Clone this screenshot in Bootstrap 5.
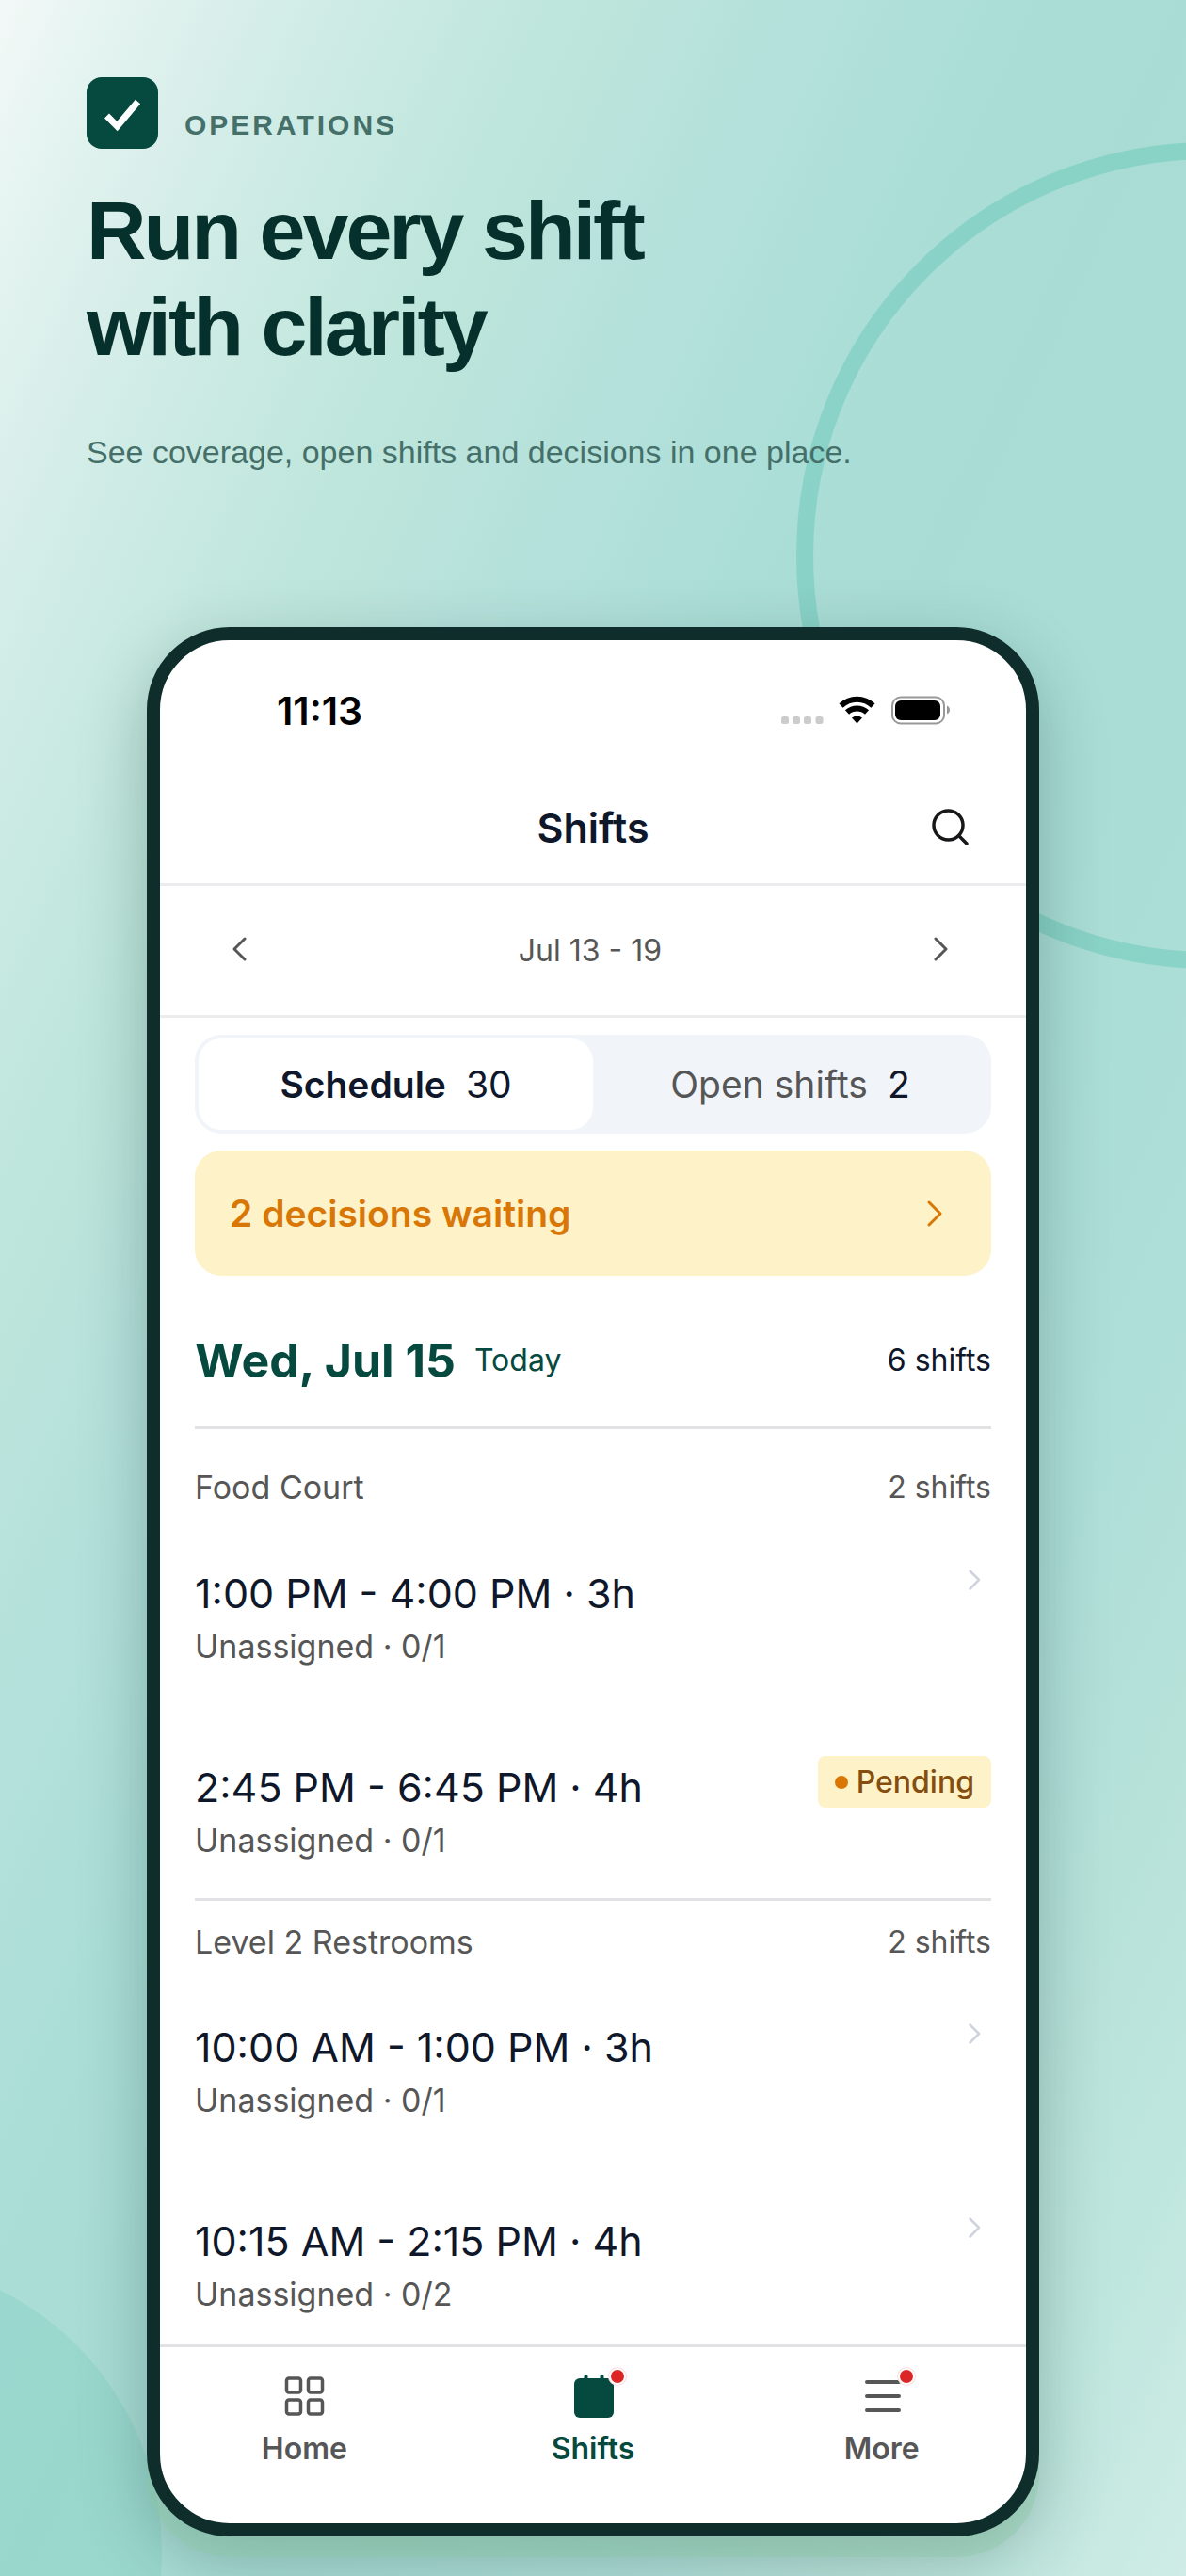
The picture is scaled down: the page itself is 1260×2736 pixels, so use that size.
<!DOCTYPE html>
<html lang="en">
<head>
<meta charset="utf-8">
<meta name="viewport" content="width=device-width, initial-scale=1">
<title>Run every shift with clarity</title>
<link rel="stylesheet" href="https://cdn.jsdelivr.net/npm/bootstrap@5.3.0/dist/css/bootstrap.min.css">
<style>
  body { font-family: Inter, "Liberation Sans", sans-serif; color: #0f172a; background: #a9ddd5; }
  .promo { min-height: 100vh; padding: 82px 92px 42px; isolation: isolate;
    background: linear-gradient(to bottom right, #f3f8f7 0%, #e4f4f0 5%, #d8eeea 10%, #cdebe4 15%, #c4e8df 20%, #bde5db 25%, #b8e2dc 30%, #b2e0da 36%, #acded8 42%, #a8dcd4 50%, #a9ddd5 62%, #aedfd8 75%, #b7e2da 84%, #bee6de 91%, #cfece6 100%); }
  .deco { z-index: -1; pointer-events: none; }
  .ring { width: 878px; height: 878px; left: 846px; top: 151px; border: 18px solid rgba(94, 196, 178, .42); }
  .disc { width: 620px; height: 620px; left: -448px; top: 2400px; background: rgba(133, 207, 195, .42); }

  .intro { font-family: "Liberation Sans", Arial, sans-serif; }
  .logo-tile { width: 76px; height: 76px; border-radius: 16px; background: #05493f; }
  .eyebrow { font-size: 30px; line-height: 32px; font-weight: 700; letter-spacing: 3px; color: #45706a; padding-top: 26px; }
  .headline { font-size: 88px; line-height: 102px; font-weight: 700; letter-spacing: -3px; color: #06302b; margin: 36px 0 62px; }
  .tagline { font-size: 34px; line-height: 40px; color: #45706a; margin: 0; }

  .phone { max-width: 948px; margin: 166px auto 0; border: 14px solid #0f2e2b; border-radius: 88px; background: #fff;
    box-shadow: 0 22px 0 rgba(140, 200, 165, .4), 0 24px 70px rgba(12, 46, 42, .27); }
  .status { padding: 51px 80px 0 124px; height: 136px; }
  .clock { font-size: 41px; line-height: 48px; font-weight: 600; color: #000; }
  .appbar { height: 125px; border-bottom: 3px solid #ececee; padding-top: 4px; }
  .appbar-title { font-size: 43px; line-height: 52px; font-weight: 600; }
  .search { right: 60px; }
  .week { height: 140px; border-bottom: 3px solid #ececee; padding: 0 78px 0 72px; color: #565656; }
  .bare { border: 0; background: none; padding: 0; color: inherit; line-height: 0; }
  .content { padding: 18px 37px 0; }

  .segments { background: #f1f4f9; border-radius: 28px; padding: 4px; height: 105px; }
  .segments .nav-link { height: 97px; font-size: 39px; line-height: 48px; color: #565656; border: 0; background: none; border-radius: 24px; padding: 0; gap: 21px; }
  .segments .nav-link.active { background: #fff; color: #0f172a; font-weight: 600; }
  .tally { font-weight: 400; color: #0f172a; }
  .notice { margin-top: 18px; height: 133px; border-radius: 28px; background: #fef2c8; color: #d97706; font-size: 39px; line-height: 48px; font-weight: 600; padding: 0 47px 0 37px; border: 0; }
  .day { height: 163px; padding-top: 19px; gap: 20px; border-bottom: 3px solid #e2e2e4; }
  .day-name { font-size: 50px; line-height: 60px; font-weight: 700; }
  .brand { color: #05493f; }
  .meta { font-size: 32px; line-height: 40px; }
  .zone { height: 124px; font-size: 34px; line-height: 40px; color: #565656; }
  .zone-next { height: 105px; padding-bottom: 17px; }
  .slot { height: 206px; color: #0f172a; text-decoration: none; }
  .slot-time { font-size: 43px; line-height: 52px; margin-top: 24px; }
  .slot-state { font-size: 34px; line-height: 40px; color: #565656; margin-top: 11px; }
  .slot-end { margin-top: 17px; }
  .slot-rule { height: 171px; border-bottom: 3px solid #e2e2e4; }
  .slot-last { height: 160px; }
  .pending { background: #fef2c8; color: #854d0e; border-radius: 8px; height: 55px; font-size: 32px; line-height: 40px; font-weight: 500; padding: 0 18px; gap: 9px; }
  .pending-dot { width: 14px; height: 14px; border-radius: 50%; background: #d97706; }
  .tabs { border-top: 3px solid #e2e2e4; height: 190px; padding-top: 28px; }
  .tab { color: #565656; font-size: 32px; line-height: 40px; font-weight: 600; text-decoration: none; gap: 12px; }
  .tab.active { color: #05493f; }
  .alert-dot { width: 18px; height: 18px; border-radius: 50%; background: #dc2626; border: 2px solid #fff; box-shadow: 0 0 0 1px #f9dede; top: -6px; left: 41px; }
  svg { display: block; flex: none; }
</style>
</head>
<body>
<main class="promo position-relative overflow-hidden">
  <div class="deco ring position-absolute rounded-circle"></div>
  <div class="deco disc position-absolute rounded-circle"></div>

  <header class="intro">
    <div class="d-flex align-items-center gap-4">
      <div class="logo-tile d-flex">
        <svg width="76" height="76" viewBox="0 0 76 76" fill="none" stroke="#fff" stroke-width="7"><path d="M21.500 41 32.500 52 54.500 26"/></svg>
      </div>
      <div class="eyebrow ms-1">OPERATIONS</div>
    </div>
    <h1 class="headline" id="headline">Run every shift<br>with clarity</h1>
    <p class="tagline">See coverage, open shifts and decisions in one place.</p>
  </header>

  <section class="phone" aria-labelledby="headline">
    <div class="status d-flex justify-content-between align-items-start">
      <span class="clock">11:13</span>
      <svg width="180" height="48" viewBox="0 0 180 48" aria-hidden="true">
        <g fill="#ccc"><rect x="0" y="30" width="8" height="8" rx="2.500"/><rect x="12" y="30" width="8" height="8" rx="2.500"/><rect x="24" y="30" width="8" height="8" rx="2.500"/><rect x="36.500" y="30" width="8" height="8" rx="2.500"/></g>
        <g fill="none" stroke="#000" stroke-width="6"><path d="M63.500 18.500a24.500 24.500 0 0 1 34 0"/><path d="M70 25.500a15.500 15.500 0 0 1 21 0"/></g>
        <path d="M75 31.500a9.500 9.500 0 0 1 11 0l-5.500 6z"/>
        <rect x="118" y="9.500" width="55" height="28" rx="9" fill="none" stroke="#999" stroke-width="2"/>
        <rect x="121" y="13" width="48" height="21" rx="6"/>
        <path d="M176 18.500v9q3-1.200 3-4.500t-3-4.500z" fill="#999"/>
      </svg>
    </div>
    <div class="appbar d-flex align-items-center justify-content-center position-relative">
      <span class="appbar-title">Shifts</span>
      <button class="bare search position-absolute" type="button" aria-label="Search">
        <svg width="40" height="40" viewBox="0 0 40 40" fill="none" stroke="#18181b" stroke-width="3.500" stroke-linecap="round"><circle cx="17.500" cy="17.500" r="15.500"/><path d="m28.500 28.500 8.500 8.500"/></svg>
      </button>
    </div>
    <div class="week d-flex align-items-center justify-content-between">
      <button class="bare" type="button" aria-label="Previous week"><svg width="24" height="30" viewBox="0 0 24 30" fill="none" stroke="currentColor" stroke-width="3" stroke-linecap="round" stroke-linejoin="round"><path d="M18 2 7 13 18 24"/></svg></button>
      <span class="meta">Jul 13 - 19</span>
      <button class="bare" type="button" aria-label="Next week"><svg width="24" height="30" viewBox="0 0 24 30" fill="none" stroke="currentColor" stroke-width="3" stroke-linecap="round" stroke-linejoin="round"><path d="M6 2 17 13 6 24"/></svg></button>
    </div>

    <div class="content">
      <div class="segments nav flex-nowrap" role="tablist">
        <button class="nav-link active d-flex align-items-center justify-content-center w-50" type="button" role="tab" aria-selected="true">Schedule <span class="tally">30</span></button>
        <button class="nav-link d-flex align-items-center justify-content-center w-50" type="button" role="tab" aria-selected="false">Open shifts <span class="tally">2</span></button>
      </div>
      <button class="notice d-flex align-items-center justify-content-between w-100" type="button">2 decisions waiting
        <svg width="24" height="30" viewBox="0 0 24 30" fill="none" stroke="currentColor" stroke-width="3" stroke-linecap="round" stroke-linejoin="round"><path d="M5 3 17 15 5 27"/></svg>
      </button>
      <div class="day d-flex align-items-center">
        <span class="day-name brand">Wed, Jul 15</span>
        <span class="meta brand">Today</span>
        <span class="meta ms-auto">6 shifts</span>
      </div>

      <div class="zone d-flex align-items-center justify-content-between"><span>Food Court</span><span class="meta">2 shifts</span></div>
      <a class="slot d-flex justify-content-between align-items-start" href="#">
        <span><span class="slot-time d-block">1:00 PM - 4:00 PM · 3h</span><span class="slot-state d-block">Unassigned · 0/1</span></span>
        <svg class="slot-end" width="36" height="38" viewBox="0 0 36 38" fill="none" stroke="#cfd4dc" stroke-width="2.500" stroke-linecap="round" stroke-linejoin="round"><path d="m13.500 9.500 9.500 9.500-9.500 9.500"/></svg>
      </a>
      <a class="slot slot-rule d-flex justify-content-between align-items-start" href="#">
        <span><span class="slot-time d-block">2:45 PM - 6:45 PM · 4h</span><span class="slot-state d-block">Unassigned · 0/1</span></span>
        <span class="pending slot-end d-flex align-items-center"><span class="pending-dot"></span>Pending</span>
      </a>

      <div class="zone zone-next d-flex align-items-center justify-content-between"><span>Level 2 Restrooms</span><span class="meta">2 shifts</span></div>
      <a class="slot d-flex justify-content-between align-items-start" href="#">
        <span><span class="slot-time d-block">10:00 AM - 1:00 PM · 3h</span><span class="slot-state d-block">Unassigned · 0/1</span></span>
        <svg class="slot-end" width="36" height="38" viewBox="0 0 36 38" fill="none" stroke="#cfd4dc" stroke-width="2.500" stroke-linecap="round" stroke-linejoin="round"><path d="m13.500 9.500 9.500 9.500-9.500 9.500"/></svg>
      </a>
      <a class="slot slot-last d-flex justify-content-between align-items-start" href="#">
        <span><span class="slot-time d-block">10:15 AM - 2:15 PM · 4h</span><span class="slot-state d-block">Unassigned · 0/2</span></span>
        <svg class="slot-end" width="36" height="38" viewBox="0 0 36 38" fill="none" stroke="#cfd4dc" stroke-width="2.500" stroke-linecap="round" stroke-linejoin="round"><path d="m13.500 9.500 9.500 9.500-9.500 9.500"/></svg>
      </a>
    </div>

    <nav class="tabs row g-0 align-items-start" aria-label="Main">
      <a class="tab col d-flex flex-column align-items-center" href="#">
        <svg width="48" height="48" viewBox="0 0 48 48" fill="none" stroke="currentColor" stroke-width="3.500"><rect x="5.500" y="5" width="15" height="15" rx="2.500"/><rect x="28.500" y="5" width="15" height="15" rx="2.500"/><rect x="5.500" y="28" width="15" height="15" rx="2.500"/><rect x="28.500" y="28" width="15" height="15" rx="2.500"/></svg>
        Home
      </a>
      <a class="tab active col d-flex flex-column align-items-center" href="#" aria-current="page">
        <span class="position-relative">
          <svg width="48" height="48" viewBox="0 0 48 48" fill="currentColor"><rect x="4" y="5" width="42" height="42" rx="6"/><rect x="14.500" y="1" width="4" height="8" rx="2"/><rect x="31.500" y="1" width="4" height="8" rx="2"/></svg>
          <span class="alert-dot position-absolute"></span>
        </span>
        Shifts
      </a>
      <a class="tab col d-flex flex-column align-items-center" href="#">
        <span class="position-relative">
          <svg width="48" height="48" viewBox="0 0 48 48" fill="none" stroke="currentColor" stroke-width="4" stroke-linecap="round"><path d="M8 9h34M8 24h34M8 39h34"/></svg>
          <span class="alert-dot position-absolute"></span>
        </span>
        More
      </a>
    </nav>
  </section>
</main>
<script src="https://cdn.jsdelivr.net/npm/bootstrap@5.3.0/dist/js/bootstrap.bundle.min.js"></script>
</body>
</html>
